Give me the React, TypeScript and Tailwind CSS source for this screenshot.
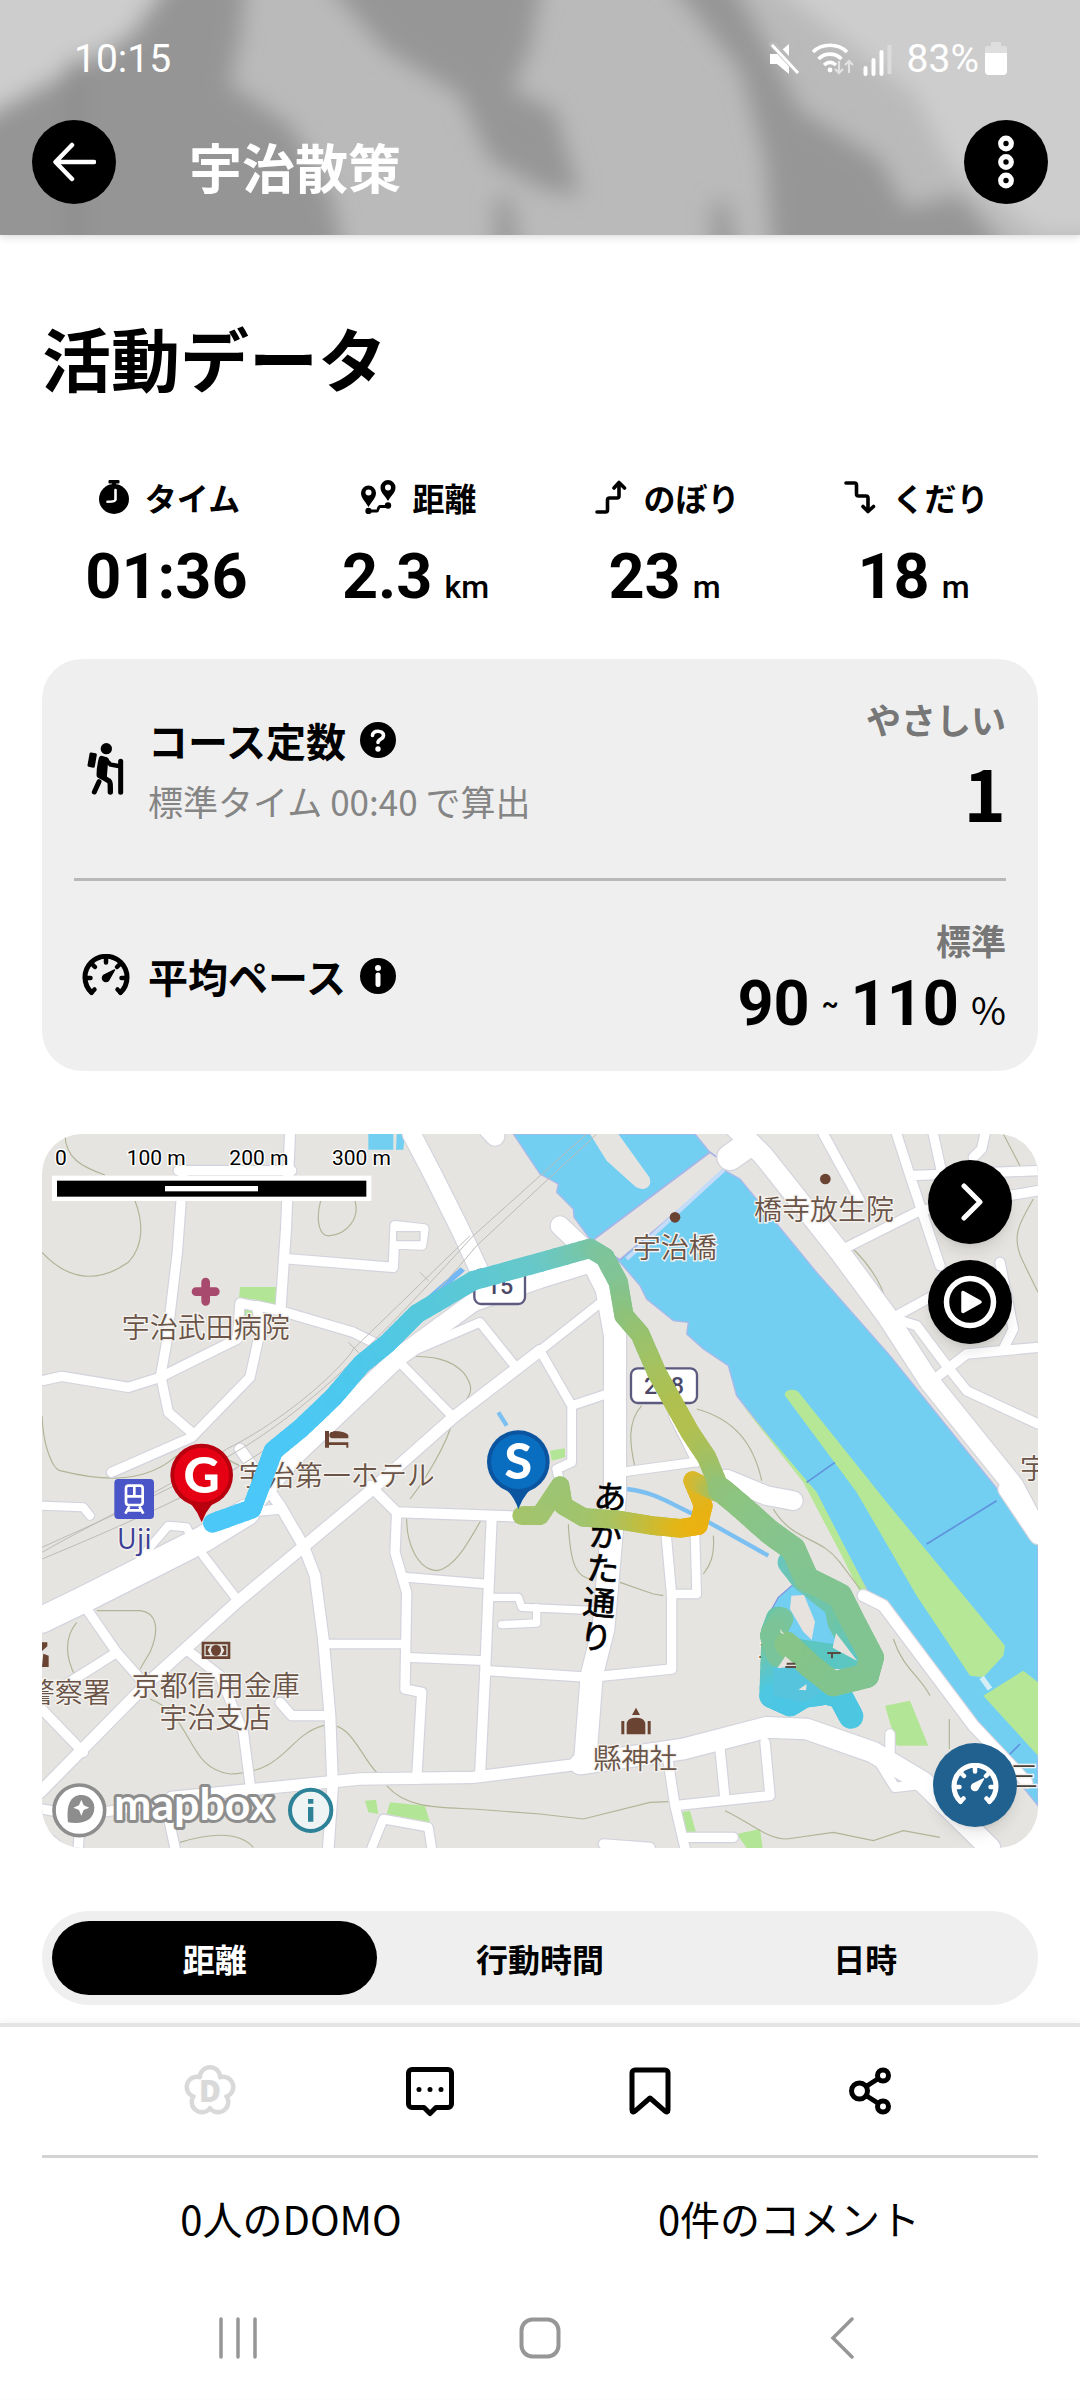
import type { ReactNode } from "react";

type Point = [number, number];
type Road = [string, number];
type TrackPoint = [number, number, number, number, number];

/* ---------- icons ---------- */

function GaugeIcon({ className }: { className: string }) {
  return (
    <svg viewBox="0 0 48 44" className={className} fill="none" stroke="currentColor" strokeLinecap="round" aria-hidden="true">
      <path d="M9.5 38.5A21 21 0 1 1 38.5 38.5" strokeWidth="5" />
      <path d="M9.5 38.5l3-3M38.5 38.5l-3-3M4 24h4.500M44 24h-4.500M24 4v4.500M10.500 10.500l2.500 2.500M37.500 10.500l-2.500 2.500" strokeWidth="4.500" />
      <path d="M32.500 16L21.500 21.500a3.500 3.500 0 1 0 5 5z" fill="currentColor" strokeWidth="1.500" strokeLinejoin="round" />
    </svg>
  );
}

function HikerIcon() {
  return (
    <svg viewBox="50 788 120 162" className="mr-3 ml-3 h-[54px] w-10" strokeLinecap="round" strokeLinejoin="round" aria-hidden="true">
      <circle cx="111" cy="808" r="17" />
      <path d="M65 824L78 826 72 861 59 858z" stroke="#000" strokeWidth="9" />
      <path d="M97 838C92 855 90 872 90 888L104 893 107 856 110 842z" stroke="#000" strokeWidth="17" />
      <g fill="none" stroke="#000">
        <path d="M108 840L124 856 148 860" strokeWidth="13" />
        <path d="M154 846V939" strokeWidth="15" />
        <path d="M94 890L119 905C123 908 123 915 123 938" strokeWidth="16" />
        <path d="M89 907L75 938" strokeWidth="15" />
      </g>
    </svg>
  );
}

function StopwatchIcon() {
  return (
    <svg viewBox="0 0 30 34" className="h-[34px] w-[30px]" aria-hidden="true">
      <rect x="9.500" y="0" width="11" height="3.500" rx="1" fill="#000" />
      <rect x="13" y="2" width="4" height="5" fill="#000" />
      <circle cx="15" cy="19" r="15" fill="#000" />
      <path d="M16.500 10v9.500c0 1.500-3 2.300-8 2.300" fill="none" stroke="#fff" strokeWidth="2.600" strokeLinecap="round" />
    </svg>
  );
}

function RouteIcon() {
  return (
    <svg viewBox="0 0 36 34" className="h-[34px] w-9" aria-hidden="true">
      <path d="M8.500 27C5 21 1 18 1 13a7.500 7.500 0 0 1 15 0c0 5-4 8-7.500 14zM28 21c-3.500-6-7.500-8.500-7.500-13.500a7.500 7.500 0 0 1 15 0C35.500 12.500 31.500 15 28 21z" fill="#000" />
      <circle cx="8.500" cy="12.500" r="3" fill="#fff" />
      <circle cx="28" cy="7.500" r="3" fill="#fff" />
      <path d="M8.500 31h8.500c1.500 0 1-4.500 3-4.500h8" fill="none" stroke="#000" strokeWidth="2.800" />
      <circle cx="8.500" cy="31" r="3.200" fill="#000" />
      <circle cx="28" cy="25.500" r="3.200" fill="#000" />
    </svg>
  );
}

function ClimbIcon() {
  return (
    <svg viewBox="0 0 32 34" className="h-[34px] w-8" fill="none" stroke="#000" strokeWidth="3.600" strokeLinecap="round" strokeLinejoin="round" aria-hidden="true">
      <path d="M2 32h8.500a2 2 0 0 0 2-2V20a2 2 0 0 1 2-2H22a2 2 0 0 0 2-2V4" />
      <path d="M19 8l5-5.500L29.500 8" />
    </svg>
  );
}

function DescentIcon() {
  return (
    <svg viewBox="0 0 32 34" className="h-[34px] w-8" fill="none" stroke="#000" strokeWidth="3.600" strokeLinecap="round" strokeLinejoin="round" aria-hidden="true">
      <path d="M2 3h8.500a2 2 0 0 1 2 2v9a2 2 0 0 0 2 2H22a2 2 0 0 1 2 2v13" />
      <path d="M19 26.500l5 5 5.500-5" />
    </svg>
  );
}

function HelpIcon() {
  return (
    <svg viewBox="0 0 36 36" className="size-9" aria-hidden="true">
      <circle cx="18" cy="18" r="18" fill="#000" />
      <path d="M12.500 13.500c0-6 11-5.500 11 0 0 4-5.500 3.500-5.500 7" fill="none" stroke="#fff" strokeWidth="3.600" strokeLinecap="round" />
      <circle cx="18" cy="27" r="2.700" fill="#fff" />
    </svg>
  );
}

function InfoIcon() {
  return (
    <svg viewBox="0 0 36 36" className="size-9" aria-hidden="true">
      <circle cx="18" cy="18" r="18" fill="#000" />
      <circle cx="18" cy="10" r="3" fill="#fff" />
      <path d="M18 17v9.500" stroke="#fff" strokeWidth="5" strokeLinecap="round" />
    </svg>
  );
}

function DomoIcon() {
  const petals: Point[] = [[26, 12.500], [39, 22], [34, 37], [18, 37], [13, 22]];
  return (
    <svg viewBox="0 0 52 52" className="size-[52px]" aria-hidden="true">
      {petals.map(([x, y]) => <circle key={`o${x}`} cx={x} cy={y} r="12.500" fill="#d9d9d9" />)}
      {petals.map(([x, y]) => <circle key={`i${x}`} cx={x} cy={y} r="8" fill="#fff" />)}
      <circle cx="26" cy="26" r="15" fill="#fff" />
      <text x="26" y="37" textAnchor="middle" fontSize="30" fontWeight="800" fill="#d9d9d9" fontFamily="'Open Sans', sans-serif">D</text>
    </svg>
  );
}

function CommentIcon() {
  return (
    <svg viewBox="0 0 50 52" className="h-[52px] w-[50px]" fill="none" stroke="#000" strokeWidth="5" strokeLinejoin="round" aria-hidden="true">
      <path d="M7 4.500h36a3.500 3.500 0 0 1 3.500 3.500v31a3.500 3.500 0 0 1-3.500 3.500H31l-6 6-6-6H7A3.500 3.500 0 0 1 3.500 39V8A3.500 3.500 0 0 1 7 4.500z" />
      <path d="M14 24.500h.01M25 24.500h.01M36 24.500h.01" strokeLinecap="round" />
    </svg>
  );
}

function BookmarkIcon() {
  return (
    <svg viewBox="0 0 44 50" className="h-[50px] w-11" fill="none" stroke="#000" strokeWidth="5" strokeLinejoin="round" aria-hidden="true">
      <path d="M7 4h30a3 3 0 0 1 3 3v37c0 2-1.500 2.500-3 1.200L22 32 7 45.200C5.500 46.500 4 46 4 44V7a3 3 0 0 1 3-3z" />
    </svg>
  );
}

function ShareIcon() {
  return (
    <svg viewBox="0 0 44 48" className="h-12 w-11" fill="none" stroke="#000" strokeWidth="5" aria-hidden="true">
      <circle cx="11.500" cy="24" r="8" />
      <circle cx="35" cy="8.500" r="5.500" />
      <circle cx="35" cy="39.500" r="5.500" />
      <path d="M18 19.500l12.500-8M18 28.500l12.500 8" />
    </svg>
  );
}

/* ---------- header ---------- */

function StatusBar() {
  return (
    <div className="relative flex h-11 items-center justify-between pr-[73px] pl-[74px] font-['Roboto',sans-serif] text-[39px] leading-[44px] text-white">
      <span>10:15</span>
      <div className="flex items-center">
        <svg viewBox="0 0 124 34" className="mr-3.5 h-[34px] w-[124px]" aria-hidden="true">
          <path d="M1 12h7L20 2v30L8 22H1z" fill="#fff" />
          <path d="M2 0L31 31" stroke="#b9b9b9" strokeWidth="7" />
          <path d="M3 3L29 31" stroke="#fff" strokeWidth="3" />
          <g fill="none" stroke="#fff" strokeWidth="3.600">
            <path d="M44 10c9-9 25-9 34 0M49.500 17c6.500-6.500 16.500-6.500 23 0M55 23c4-3.500 8-3.500 12 0" />
          </g>
          <circle cx="61" cy="28" r="2.400" fill="#fff" />
          <path d="M70 19v12m-4-4l4 4 4-4M80 31V19m-4 4l4-4 4 4" stroke="#e2e2e2" strokeWidth="2.200" fill="none" />
          <path d="M96.500 26v6M104.500 18v14M112.500 10v22" stroke="#fff" strokeWidth="4" strokeLinecap="round" />
          <path d="M120.500 3v29" stroke="#dcdcdc" strokeWidth="4" />
        </svg>
        <span>83%</span>
        <svg viewBox="0 0 22 34" className="ml-1.5 h-[34px] w-[22px]" aria-hidden="true">
          <path d="M6 0h10v4h3a3 3 0 0 1 3 3v5H0V7a3 3 0 0 1 3-3h3z" fill="#dedede" />
          <path d="M0 11h22v18a4 4 0 0 1-4 4H4a4 4 0 0 1-4-4z" fill="#fff" />
        </svg>
      </div>
    </div>
  );
}

function Header() {
  return (
    <header className="relative h-[235px] overflow-hidden bg-[#bababa] pt-[37px]">
      <svg viewBox="0 0 1080 235" preserveAspectRatio="none" className="absolute inset-0 h-full w-full" aria-hidden="true">
        <defs>
          <filter id="soft" x="-10%" y="-20%" width="120%" height="140%">
            <feGaussianBlur stdDeviation="11" />
          </filter>
        </defs>
        <g filter="url(#soft)">
          <path d="M-40-40H190L120 45 60 75-40 130z" fill="#cdcdcd" />
          <path d="M740-40H1120V235H1040L950 165 915 95 850 45z" fill="#cdcdcd" />
          <path d="M175-30H248L240 40 230 85 290 125 330 190 350 280H-40V130L70 70 130 35z" fill="#959595" />
          <path d="M315-30H545L530 50 512 90 555 110 580 195 545 190 490 160 460 95 385 50z" fill="#969696" />
          <path d="M660-30H725L775 60 800 110 880 160 905 208 960 195 1030 280H775L765 160 740 70z" fill="#969696" />
          <path d="M495 280V200L510 195 525 280zM712 280V205L727 200 742 280z" fill="#989898" />
          <path d="M75 60V280" stroke="#8c8c8c" strokeWidth="16" />
        </g>
      </svg>
      <StatusBar />
      <div className="relative mt-[39px] flex items-center pr-8 pl-8">
        <button type="button" aria-label="戻る" className="grid size-[84px] place-items-center rounded-full bg-black">
          <svg viewBox="0 0 44 40" className="h-10 w-11" fill="none" stroke="#fff" strokeWidth="4.500" strokeLinecap="round" strokeLinejoin="round" aria-hidden="true">
            <path d="M42 20H4M20 3L3.500 20 20 37" />
          </svg>
        </button>
        <p className="mt-2 ml-[73px] flex-1 text-[53px] leading-[64px] font-bold text-white">宇治散策</p>
        <button type="button" aria-label="メニュー" className="grid size-[84px] place-items-center rounded-full bg-black">
          <svg viewBox="0 0 16 54" className="h-[54px] w-4" fill="none" stroke="#fff" strokeWidth="5.200" aria-hidden="true">
            <circle cx="8" cy="8.500" r="5.300" />
            <circle cx="8" cy="27" r="5.300" />
            <circle cx="8" cy="45.500" r="5.300" />
          </svg>
        </button>
      </div>
    </header>
  );
}

/* ---------- activity data ---------- */

function Stat({ icon, label, value, unit }: { icon: ReactNode; label: string; value: string; unit?: string }) {
  return (
    <div className="flex flex-col items-center">
      <dt className="flex h-10 items-center gap-4 pl-1.5 text-[32px] leading-10 font-semibold">
        {icon}
        {label}
      </dt>
      <dd className="mt-7 flex h-16 items-baseline gap-3 font-['Roboto',sans-serif] text-[63px] leading-[64px] font-bold">
        {value}
        {unit && <span className="text-[32px] leading-none font-medium">{unit}</span>}
      </dd>
    </div>
  );
}

function CourseCard() {
  return (
    <section className="mt-[50px] rounded-[40px] bg-[#efefef] px-8">
      <div className="flex h-[219px] items-center">
        <HikerIcon />
        <div className="ml-2.5 flex-1">
          <h2 className="flex items-center gap-3.5 text-[40px] leading-[56px] font-bold">
            コース定数
            <button type="button" aria-label="コース定数とは"><HelpIcon /></button>
          </h2>
          <p className="mt-2 text-[35px] leading-[50px] text-[#858585]">標準タイム 00:40 で算出</p>
        </div>
        <div className="pb-3 text-right">
          <p className="text-[35px] leading-[48px] font-semibold text-[#777]">やさしい</p>
          <p className="mt-2 text-[72px] leading-[80px] font-bold">1</p>
        </div>
      </div>
      <hr className="border-t-[3px] border-[#b8b8b8]" />
      <div className="flex h-[190px] items-center">
        <GaugeIcon className="mr-3 ml-2 h-11 w-12" />
        <h2 className="ml-1.5 flex flex-1 items-center gap-3.5 text-[40px] leading-[56px] font-bold">
          平均ペース
          <button type="button" aria-label="平均ペースとは"><InfoIcon /></button>
        </h2>
        <div className="text-right">
          <p className="text-[35px] leading-[48px] font-semibold text-[#777]">標準</p>
          <p className="mt-2 flex h-16 items-baseline gap-3 font-['Roboto','Noto_Sans_CJK_JP',sans-serif] text-[63px] leading-[64px] font-bold">
            90
            <span className="self-center text-[26px] leading-none">~</span>
            110
            <span className="font-['Noto_Sans_CJK_JP',sans-serif] text-[38px] leading-none font-normal">%</span>
          </p>
        </div>
      </div>
    </section>
  );
}

/* ---------- map ---------- */

const roads: Road[] = [
  ["M750 15L738 300 722 535", 30],
  ["M415 125H755M430 125L412 370 380 640 362 740", 28],
  ["M6 755L65 742 265 775 360 745 592 630 600 522 650 532 662 600 630 745 455 925 215 1030", 28],
  ["M362 740L385 850 455 910", 28],
  ["M650 530L720 545 940 610 1010 645", 28],
  ["M750 390L1060 415 1065 290 1152 300 1145 348 1070 345", 28],
  ["M1115 15L1180 140 1260 300 1320 430", 54],
  ["M1345 0L1365 22", 56],
  ["M1110 670L1320 580 1420 705", 26],
  ["M1060 680L1240 865", 26],
  ["M1500 665L1240 865 980 1095 590 1420 320 1665 0 1990", 34],
  ["M490 1280L590 1410", 26],
  ["M140 1440L230 1570 310 1660M230 1570L80 1665M0 1735L130 1870", 28],
  ["M600 960L720 1130 790 1250 825 1340 850 1530 870 1760 878 1970 865 2157", 32],
  ["M620 1150L720 1140", 28],
  ["M300 1290L385 1190 440 1195 460 1240M6 1130L130 1135 150 1160", 24],
  ["M990 1070L1070 1150 1500 1165", 30],
  ["M1070 1150L1065 1270 1100 1390 1095 1680 1145 1690 1130 1950", 28],
  ["M1355 1170L1345 1400 1335 1640 1320 1940", 30],
  ["M1100 1345L1340 1365M865 1545H1095M1100 1585L1335 1595", 26],
  ["M1340 1625L1650 1645 1895 1620 1895 1400 1875 1180", 28],
  ["M1350 1405H1435L1445 1435 1670 1445M1490 1435V1482L1385 1487", 22],
  ["M395 2005L960 1950 1300 1945 1620 1905", 34],
  ["M1620 1905L1930 1860 2180 1795 2300 1800 2500 1870 2650 1960 2850 2157", 62],
  ["M450 1570L540 1640 610 1810 632 1980M720 1720L755 1760H860", 28],
  ["M380 2040L405 2157M6 2040L120 2060 115 2157M6 2110L60 2157M120 2060L380 2020", 28],
  ["M995 2157L1030 2070 1165 2095 1175 2157", 26],
  ["M1885 1900L1905 2030 1935 2157M1905 2030L2190 2000 2175 1840M2040 1860L2055 2010M1690 2145L1830 2155M1930 2125H2080", 28],
  ["M1965 1220L1970 1395H1900", 26],
  ["M2550 1815V1900M2500 1870L2565 1975 2650 1965", 28],
  ["M2080 -10L2170 80 2400 370 2540 560 2670 760 2920 1070 2994 1210", 60],
  ["M2070 85L2120 50", 76],
  ["M1560 290L1660 385", 56],
  ["M2060 1050L2180 1100 2260 1115", 56],
  ["M2470 1400L2530 1430 2800 1790 2960 1960", 34],
  ["M2350 15L2460 215M2570 15L2610 140 2700 410M2610 140L2994 125M2680 15L2705 130M2835 15L2825 60 2800 85", 28],
  ["M2390 370L2640 245 2994 185M2880 400L2920 600 2890 660", 28],
  ["M2550 565L2630 590 2720 710 2780 785 2994 885M2670 760L2780 675 2994 655M2560 565L2680 500", 28],
  ["M1500 665L1690 515M1500 665L1595 830V1000L1550 1020 1560 1060M1595 830L1700 795M1740 1030L1960 1000M1900 860L1970 1000", 26],
  ["M2900 1080L2994 1220", 50],
  ["M6 1472L130 1412 490 1230 620 1150", 78],
  ["M620 1150L760 985 1080 680 1300 520 1500 450 1660 400", 54],
  ["M1660 400L1700 480 1725 620V1100L1690 1500 1655 1640 1635 1900", 66],
];

const contours =
  "M75 15C75 90 130 115 195 138M285 215C310 280 312 350 265 400C180 460 90 460 6 370M842 215C825 280 840 325 870 320C920 315 960 270 945 215M1090 682C1180 680 1230 690 1270 730C1300 770 1295 790 1280 810M6 860C10 960 40 1020 60 1025C200 1060 320 1060 410 980M520 960C580 1010 640 1030 690 1035M1240 870C1220 950 1150 1060 1110 1110M1100 1170C1100 1240 1130 1320 1190 1325C1240 1320 1280 1250 1325 1170M170 1445H300C350 1450 360 1500 330 1570L300 1620M110 1480C70 1530 80 1590 105 1640M330 1710C460 1760 440 1920 570 1935C740 1930 740 1820 850 1790C930 1770 960 1880 1010 1930M1040 1970C1100 2040 1200 2035 1300 2040L1500 2055 1630 2070 1830 2020 1885 2018M2055 2045C2130 2080 2180 2130 2240 2130L2380 2110 2500 2135 2590 2105 2700 2125M420 2140C520 2110 600 2110 640 2155M1585 1185C1590 1280 1600 1350 1660 1350M1740 1360L1840 1395 1870 1400M2020 1220C2025 1280 2010 1310 1990 1335M2180 60C2220 120 2240 110 2240 140M2440 360C2500 420 2530 480 2540 525M2770 205M2980 210C2940 280 2910 320 2950 400L2994 490M2890 15L2945 120M2590 620L2665 730M1805 830C1760 880 1770 950 1785 1015M1970 840C2080 870 2140 940 2165 1055M2200 1140C2260 1240 2340 1220 2400 1300L2460 1380M2560 1530C2590 1620 2640 1640 2670 1700M2728 1770V1860";

const trackMain: TrackPoint[] = [
  [518, 1182, 75, 200, 248], [635, 1140, 75, 200, 248], [665, 1060, 75, 200, 248], [700, 965, 75, 200, 246],
  [780, 900, 75, 200, 244], [880, 805, 76, 200, 240], [965, 705, 78, 200, 235], [1040, 645, 80, 200, 230],
  [1130, 555, 85, 200, 222], [1300, 455, 92, 200, 212], [1500, 400, 104, 200, 200], [1650, 358, 120, 197, 165],
  [1695, 385, 125, 196, 155], [1735, 460, 130, 196, 148], [1752, 560, 140, 194, 125], [1800, 615, 150, 194, 112],
  [1850, 730, 165, 194, 95], [1900, 820, 175, 192, 80], [1950, 910, 178, 192, 78], [2000, 985, 165, 192, 95],
  [2040, 1080, 145, 194, 120], [2100, 1130, 140, 196, 130], [2190, 1210, 136, 196, 138], [2260, 1260, 133, 196, 142],
  [2300, 1350, 130, 196, 145], [2400, 1400, 130, 196, 145], [2435, 1470, 130, 196, 145], [2495, 1585, 130, 196, 145],
  [2480, 1640, 130, 196, 145], [2380, 1665, 130, 196, 142], [2310, 1610, 130, 196, 140], [2240, 1545, 135, 196, 135],
];

const trackLoop: TrackPoint[] = [
  [2250, 1300, 105, 198, 190], [2290, 1350, 110, 196, 175], [2390, 1430, 110, 197, 170], [2400, 1480, 112, 197, 165],
  [2460, 1590, 95, 198, 190], [2360, 1580, 90, 198, 195], [2230, 1560, 95, 198, 185], [2200, 1510, 110, 197, 165],
  [2215, 1470, 105, 197, 170], [2200, 1560, 115, 197, 160], [2195, 1700, 78, 199, 225], [2250, 1725, 75, 198, 228],
  [2290, 1700, 75, 198, 228], [2360, 1690, 78, 198, 225], [2400, 1700, 78, 198, 222], [2433, 1762, 76, 198, 226],
];

const trackStart: TrackPoint[] = [
  [1445, 1160, 165, 196, 105], [1500, 1160, 162, 196, 110], [1560, 1070, 155, 196, 115], [1570, 1130, 158, 196, 112],
  [1630, 1165, 160, 196, 110], [1730, 1172, 170, 194, 95], [1840, 1190, 200, 188, 55], [1920, 1198, 225, 182, 25],
  [1975, 1190, 235, 178, 15], [1990, 1130, 232, 178, 20], [1958, 1055, 220, 184, 40], [2030, 1090, 165, 192, 95],
];

/* Splits a coloured polyline into short strokes whose colour fades from point to point. */
function Track({ points, width }: { points: TrackPoint[]; width: number }) {
  const steps = 6;
  const pieces: ReactNode[] = [];
  points.slice(0, -1).forEach((from, i) => {
    const to = points[i + 1];
    for (let s = 0; s < steps; s++) {
      const at = (k: number, t: number) => from[k] + (to[k] - from[k]) * t;
      const a = s / steps;
      const b = (s + 1) / steps;
      const rgb = [2, 3, 4].map((k) => Math.round(at(k, a))).join(",");
      pieces.push(
        <line key={`${i}-${s}`} x1={at(0, a)} y1={at(1, a)} x2={at(0, b)} y2={at(1, b)} stroke={`rgb(${rgb})`} />,
      );
    }
  });
  return <g strokeWidth={width} strokeLinecap="round">{pieces}</g>;
}

function Pin({ x, y, letter, fill, edge }: { x: number; y: number; letter: string; fill: string; edge: string }) {
  return (
    <g transform={`translate(${x} ${y})`}>
      <path d="M-70 60Q-20 85 0 142Q20 85 70 60z" fill={edge} />
      <circle r="94" fill={edge} />
      <circle r="82" fill={fill} />
      <text y="53" textAnchor="middle" fontSize="150" fontWeight="900" fill="#fff" fontFamily="Lato, sans-serif">{letter}</text>
    </g>
  );
}

function RouteMap() {
  return (
    <svg viewBox="6 15 2988 2142" className="block w-full" role="img" aria-label="活動ルートの地図">
      <rect x="0" y="0" width="3000" height="2160" fill="#e5e4e0" />
      <path d="M985 15H1060V62H985zM1070 15H1095L1090 62H1068z" fill="#73cff2" />
      <path d="M1420 15L1500 135 1555 165 1550 190 1600 240 1602 265 1650 330 1740 400 1800 470 1820 510 1900 575 1945 580 1940 615 1990 660 2065 710 2090 800 2310 1080 2480 1380 2840 1840 2994 2030V1250L2880 1090 2550 680 2330 430 2100 150 2055 125 2010 70 1965 15z" fill="#73cff2" stroke="#a9b8ea" strokeWidth="4" />
      <path d="M1650 15L1700 95 1785 172C1810 190 1840 175 1828 145L1735 15z" fill="#e5e4e0" />
      <path d="M2010 70L1650 340 1740 392 2070 112z" fill="#e5e4e0" stroke="#a9b1e6" strokeWidth="5" />
      <path d="M1760 390L2052 122" stroke="#c4dcf8" strokeWidth="12" />
      <path d="M2235 800C2230 780 2270 775 2280 795L2540 1120 2895 1550 2890 1580 2830 1645 2790 1640 2630 1400 2450 1090z" fill="#b5e797" />
      <path d="M2830 1700L2950 1625 2994 1660V1880zM2100 820L2330 1090 2480 1380 2460 1390 2400 1270 2290 1060z" fill="#b5e797" />
      <path d="M2825 1645L2850 1680" stroke="#d5eef5" strokeWidth="16" />
      <path d="M2300 1060L2385 1000M2660 1245L2870 1115M2895 1890L2940 1845" stroke="#5f93dd" strokeWidth="5" />
      <path d="M600 474L712 474 706 530 640 510 597 512zM605 535H650V565H605zM975 2015L1008 2012 1015 2055 985 2050zM1050 2020L1155 2030 1170 2080 1040 2055zM2535 1730L2610 1715 2665 1850H2570zM1925 2050L1950 2045 1968 2110H1940zM2090 2115L2160 2100 2168 2157H2120zM1530 965L1575 958V985L1535 995z" fill="#b3e596" />
      <path d="M1130 530L1262 415 1275 425 1180 510z" fill="#74b7f5" />
      <path d="M1375 850L1400 890M1575 1125L1620 1150 1680 1152M1760 1080C1850 1090 1900 1130 1980 1165L2185 1280" fill="none" stroke="#7cc0f2" strokeWidth="13" />
      <path d={contours} fill="none" stroke="#b1b597" strokeWidth="3.500" />

      <g fill="none" strokeLinejoin="round" strokeLinecap="round">
        <g stroke="#d3d3dd">
          {roads.map(([d, w]) => <path key={d} d={d} strokeWidth={w + 7} />)}
        </g>
        <g stroke="#fff">
          {roads.map(([d, w]) => <path key={d} d={d} strokeWidth={w} />)}
        </g>
      </g>
      <path d="M1070 308H1140V335H1070z" fill="#e5e4e0" stroke="#d3d3dd" strokeWidth="4" />
      <path d="M6 1255C150 1190 400 1080 560 985C800 850 1000 650 1300 320L1640 15M6 1290C200 1210 500 1080 640 985C860 850 1100 600 1310 350L1670 15M6 1270C200 1160 420 1060 560 960C760 860 920 700 940 660L1290 320M1140 430L1165 455M925 640L965 680" fill="none" stroke="#bdbbb7" strokeWidth="3" />

      <g fill="#fff" stroke="#5d5a80" strokeWidth="7">
        <rect x="1303" y="422" width="152" height="103" rx="20" />
        <rect x="1773" y="718" width="198" height="104" rx="20" />
      </g>
      <g fontFamily="Roboto, sans-serif" fontSize="70" fontWeight="500" fill="#4b4868" textAnchor="middle">
        <text x="1380" y="496">15</text>
        <text x="1872" y="794">248</text>
      </g>

      <path d="M497 459V517M468 488H526" stroke="#a84a6e" strokeWidth="26" strokeLinecap="round" />
      <circle cx="1905" cy="265" r="16" fill="#6b4332" />
      <circle cx="2356" cy="150" r="16" fill="#6b4332" />
      <g fill="#6b4332">
        <path d="M855 906h12v34h58v16h-6v-8h-52v8h-12zM880 928h45v-10q-10-12-45-12z" />
        <circle cx="878" cy="918" r="10" />
        <path d="M485 1538h86v52h-86zm8 8v36h70v-36z" fillRule="evenodd" />
        <ellipse cx="528" cy="1564" rx="15" ry="17" />
        <path d="M497 1550h14l-8 14 8 14h-14zM559 1550h-14l8 14-8 14h14z" />
        <path d="M1760 1782q4-16 28-16t28 16v34h-56zM1776 1758l12-22 12 22zM1744 1776h9v40h-9zM1823 1776h9v40h-9z" />
        <path d="M6 1540h16v12l-16 14zM10 1574l16 6v34H6z" />
      </g>
      <rect x="223" y="1050" width="119" height="120" rx="12" fill="#4a55c8" />
      <g fill="none" stroke="#fff" strokeWidth="8">
        <rect x="258" y="1070" width="50" height="58" rx="8" />
        <path d="M258 1102h50M283 1070v32M268 1132l-12 22M298 1132l12 22M264 1144h38" />
      </g>
      <g fontFamily="'Noto Sans CJK JP', sans-serif" fontSize="84" fontWeight="350" fill="#6a5448" stroke="#f4f2ee" strokeWidth="8" paintOrder="stroke">
        <text x="245" y="626">宇治武田病院</text>
        <text x="596" y="1070">宇治第一ホテル</text>
        <text x="1778" y="388">宇治橋</text>
        <text x="2142" y="272">橋寺放生院</text>
        <text x="275" y="1702">京都信用金庫</text>
        <text x="358" y="1796">宇治支店</text>
        <text x="-40" y="1722">警察署</text>
        <text x="1660" y="1920">縣神社</text>
        <text x="2940" y="1050">宇</text>
        <text x="2154" y="1612" fill="#3a3430">平等院</text>
        <text x="2910" y="1974" fill="#47433f">三重</text>
        <text x="283" y="1260" textAnchor="middle" fill="#3d3f96">Uji</text>
      </g>
      <g fontFamily="'Noto Sans CJK JP', sans-serif" fontSize="98" fill="#000" stroke="#000" strokeWidth="2" textAnchor="middle">
        <text transform="translate(1708 1140) rotate(5)">あ</text>
        <text transform="translate(1695 1254) rotate(5)">が</text>
        <text transform="translate(1685 1354) rotate(5)">た</text>
        <text transform="translate(1675 1457) rotate(5)">通</text>
        <text transform="translate(1665 1560) rotate(5)">り</text>
      </g>

      <path d="M2190 1450L2215 1405 2265 1362 2330 1370 2390 1430 2400 1530 2300 1620 2200 1560z" fill="#73cff2" stroke="#7f96e0" strokeWidth="4" />
      <Track points={trackStart} width={56} />
      <Track points={trackLoop} width={74} />
      <path d="M2200 1600L2240 1560 2400 1660 2290 1720 2200 1700z" fill="#55c4dc" />
      <Track points={[[2225, 1470, 118, 197, 160], [2195, 1520, 125, 196, 150], [2215, 1580, 120, 196, 155]]} width={70} />
      <Track points={trackMain.slice(0, 21)} width={58} />
      <Track points={trackMain.slice(20)} width={74} />
      <path d="M2254 1400L2292 1398 2325 1478 2315 1532 2290 1508 2250 1440zM2388 1512L2452 1596 2378 1556zM2212 1618L2236 1582 2270 1612zM2220 1500L2233 1516 2222 1512zM2275 1682L2300 1665 2298 1684z" fill="#e8e2df" />
      <path d="M2362 1572H2402M2376 1572V1588M2240 1604H2266M2236 1614H2268" stroke="#5a4a42" strokeWidth="6" />

      <Pin x={485} y={1038} letter="G" fill="#e60013" edge="#b8000f" />
      <Pin x={1435} y={998} letter="S" fill="#0a6ec0" edge="#0b55a0" />

      <rect x="36" y="140" width="958" height="76" fill="#fff" />
      <rect x="51" y="155" width="928" height="48" fill="#000" />
      <rect x="375" y="171" width="279" height="16" fill="#fff" />
      <g fontFamily="Roboto, sans-serif" fontSize="63" fill="#000" stroke="#fff" strokeWidth="8" paintOrder="stroke">
        <text x="45" y="108">0</text>
        <text x="260" y="108">100 m</text>
        <text x="568" y="108">200 m</text>
        <text x="876" y="108">300 m</text>
      </g>

      <circle cx="118" cy="2044" r="76" fill="#fff" stroke="#8d8d8d" strokeWidth="11" />
      <path d="M84 2080C78 2030 90 1998 125 1998a38 38 0 0 1 38 38C163 2072 130 2088 84 2080z" fill="#8d8d8d" />
      <path d="M124 2012l7 17 17 7-17 7-7 17-7-17-17-7 17-7z" fill="#fff" />
      <text x="222" y="2074" fontFamily="Lato, sans-serif" fontSize="134" fontWeight="700" fill="#fff" stroke="#8d8d8d" strokeWidth="18" strokeLinejoin="round" paintOrder="stroke">mapbox</text>
      <circle cx="812" cy="2044" r="62" fill="#eef3f4" stroke="#2d8298" strokeWidth="12" />
      <path d="M804 2010h16v14h-16zM804 2034h16v44h-16z" fill="#2d8298" />
    </svg>
  );
}

function MapPanel() {
  return (
    <section className="relative mt-[63px] overflow-hidden rounded-[40px]">
      <RouteMap />
      <div className="absolute top-[26px] right-[26px] flex flex-col gap-4">
        <button type="button" aria-label="地図を開く" className="grid size-[84px] place-items-center rounded-full bg-black text-white shadow-lg">
          <svg viewBox="0 0 22 38" className="ml-1 h-[38px] w-[22px]" fill="none" stroke="currentColor" strokeWidth="5" strokeLinecap="round" strokeLinejoin="round" aria-hidden="true">
            <path d="M3 3l16 16L3 35" />
          </svg>
        </button>
        <button type="button" aria-label="再生" className="grid size-[84px] place-items-center rounded-full bg-black text-white shadow-lg">
          <svg viewBox="0 0 54 54" className="size-[54px]" fill="none" stroke="currentColor" aria-hidden="true">
            <circle cx="27" cy="27" r="23.500" strokeWidth="5.500" />
            <path d="M20 17.500v19l17-9.500z" fill="currentColor" strokeWidth="3.500" strokeLinejoin="round" />
          </svg>
        </button>
      </div>
      <button type="button" aria-label="ペース表示" className="absolute right-[21px] bottom-[21px] grid size-[84px] place-items-center rounded-full bg-[#21618f] text-white shadow-lg">
        <GaugeIcon className="h-11 w-12" />
      </button>
    </section>
  );
}

/* ---------- page ---------- */

function RangeTabs() {
  return (
    <div role="tablist" className="mt-[63px] grid grid-cols-3 rounded-full bg-[#efefef] p-2.5 text-[32px] leading-[74px] font-bold">
      <button type="button" role="tab" aria-selected="true" className="rounded-full bg-black text-white">距離</button>
      <button type="button" role="tab" aria-selected="false">行動時間</button>
      <button type="button" role="tab" aria-selected="false">日時</button>
    </div>
  );
}

function Footer() {
  return (
    <footer className="relative mt-[18px] border-t-4 border-[#e4e4e4] bg-white shadow-[0_-2px_8px_rgba(0,0,0,0.05)]">
      <div className="grid h-32 grid-cols-4 place-items-center px-[100px]">
        <button type="button" aria-label="DOMOを送る"><DomoIcon /></button>
        <button type="button" aria-label="コメント"><CommentIcon /></button>
        <button type="button" aria-label="保存"><BookmarkIcon /></button>
        <button type="button" aria-label="共有"><ShareIcon /></button>
      </div>
      <hr className="mx-[42px] border-t-[3px] border-[#d3d3d3]" />
      <div className="mx-[42px] grid h-[120px] grid-cols-2 text-[40px]">
        <a href="#domo" className="grid place-items-center">0人のDOMO</a>
        <a href="#comments" className="grid place-items-center">0件のコメント</a>
      </div>
      <nav className="grid h-[120px] grid-cols-3 place-items-center px-[87px] text-[#969696]">
        <button type="button" aria-label="最近のアプリ">
          <svg viewBox="0 0 40 42" className="h-[42px] w-10" stroke="currentColor" strokeWidth="3.500" strokeLinecap="round" aria-hidden="true">
            <path d="M3 2v38M20 2v38M37 2v38" />
          </svg>
        </button>
        <button type="button" aria-label="ホーム">
          <svg viewBox="0 0 42 42" className="size-[42px]" fill="none" stroke="currentColor" strokeWidth="4" aria-hidden="true">
            <rect x="2.500" y="2.500" width="37" height="37" rx="11" />
          </svg>
        </button>
        <button type="button" aria-label="戻る">
          <svg viewBox="0 0 24 42" className="h-[42px] w-6" fill="none" stroke="currentColor" strokeWidth="3.500" strokeLinecap="round" aria-hidden="true">
            <path d="M22 2L3 21l19 19" />
          </svg>
        </button>
      </nav>
    </footer>
  );
}

export default function App() {
  return (
    <div className="min-h-screen bg-white font-['Noto_Sans_CJK_JP',sans-serif] text-black">
      <div className="relative shadow-[0_2px_8px_rgba(0,0,0,0.15)]">
        <Header />
      </div>
      <main className="px-[42px] pt-[82px]">
        <h1 className="text-[69px] leading-[80px] font-bold">活動データ</h1>
        <dl className="mt-20 grid grid-cols-4">
          <Stat icon={<StopwatchIcon />} label="タイム" value="01:36" />
          <Stat icon={<RouteIcon />} label="距離" value="2.3" unit="km" />
          <Stat icon={<ClimbIcon />} label="のぼり" value="23" unit="m" />
          <Stat icon={<DescentIcon />} label="くだり" value="18" unit="m" />
        </dl>
        <CourseCard />
        <MapPanel />
        <RangeTabs />
      </main>
      <Footer />
    </div>
  );
}
